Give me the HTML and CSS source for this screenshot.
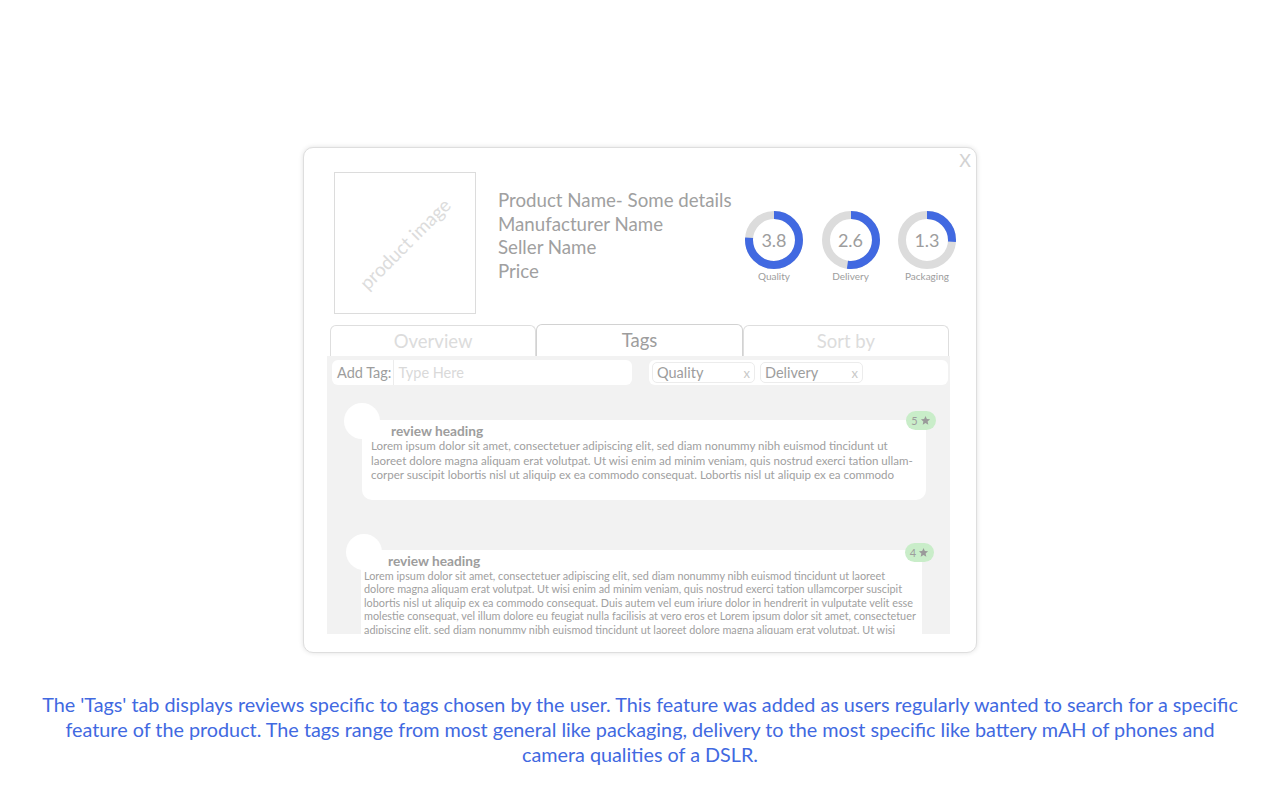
FILE: index.html
```html
<!DOCTYPE html>
<html>
<head>
<meta charset="utf-8">
<link rel="stylesheet" href="styles.css">
</head>
<body>
<div class="page">
  <div class="modal">
    <div class="close">X</div>
    <div class="header">
      <div class="product-img"><span>product image</span></div>
      <div class="product-info">
        <div>Product Name- Some details</div>
        <div>Manufacturer Name</div>
        <div>Seller Name</div>
        <div>Price</div>
      </div>
      <div class="ratings">
        <div class="rating">
          <div class="donut">
            <svg viewBox="0 0 58 58" width="58" height="58"><circle cx="29" cy="29" r="25" class="track"/><circle cx="29" cy="29" r="25" class="arc" stroke-dasharray="119.4 200" transform="rotate(-90 29 29)"/></svg>
            <span class="num">3.8</span>
          </div>
          <div class="rlabel">Quality</div>
        </div>
        <div class="rating">
          <div class="donut">
            <svg viewBox="0 0 58 58" width="58" height="58"><circle cx="29" cy="29" r="25" class="track"/><circle cx="29" cy="29" r="25" class="arc" stroke-dasharray="81.7 200" transform="rotate(-90 29 29)"/></svg>
            <span class="num">2.6</span>
          </div>
          <div class="rlabel">Delivery</div>
        </div>
        <div class="rating">
          <div class="donut">
            <svg viewBox="0 0 58 58" width="58" height="58"><circle cx="29" cy="29" r="25" class="track"/><circle cx="29" cy="29" r="25" class="arc" stroke-dasharray="40.8 200" transform="rotate(-90 29 29)"/></svg>
            <span class="num">1.3</span>
          </div>
          <div class="rlabel">Packaging</div>
        </div>
      </div>
    </div>
    <div class="tabs">
      <div class="tab">Overview</div>
      <div class="tab active">Tags</div>
      <div class="tab">Sort by</div>
    </div>
    <div class="content">
      <div class="filters">
        <div class="addtag"><span class="addlabel">Add Tag:</span><span class="placeholder">Type Here</span></div>
        <div class="chips">
          <div class="chip"><span>Quality</span><span class="cx">x</span></div>
          <div class="chip"><span>Delivery</span><span class="cx">x</span></div>
        </div>
      </div>
      <div class="review r1">
        <div class="avatar"></div>
        <div class="badge">5 <svg viewBox="0 0 24 24" width="11" height="11"><path d="M12 2l2.9 6.9 7.1.6-5.4 4.7 1.6 7-6.2-3.8-6.2 3.8 1.6-7L2 9.5l7.1-.6z"/></svg></div>
        <div class="rhead">review heading</div>
        <div class="rbody">Lorem ipsum dolor sit amet, consectetuer adipiscing elit, sed diam nonummy nibh euismod tincidunt ut<br>laoreet dolore magna aliquam erat volutpat. Ut wisi enim ad minim veniam, quis nostrud exerci tation ullam-<br>corper suscipit lobortis nisl ut aliquip ex ea commodo consequat. Lobortis nisl ut aliquip ex ea commodo</div>
      </div>
      <div class="review r2">
        <div class="avatar"></div>
        <div class="badge">4 <svg viewBox="0 0 24 24" width="11" height="11"><path d="M12 2l2.9 6.9 7.1.6-5.4 4.7 1.6 7-6.2-3.8-6.2 3.8 1.6-7L2 9.5l7.1-.6z"/></svg></div>
        <div class="rhead">review heading</div>
        <div class="rbody">Lorem ipsum dolor sit amet, consectetuer adipiscing elit, sed diam nonummy nibh euismod tincidunt ut laoreet<br>dolore magna aliquam erat volutpat. Ut wisi enim ad minim veniam, quis nostrud exerci tation ullamcorper suscipit<br>lobortis nisl ut aliquip ex ea commodo consequat. Duis autem vel eum iriure dolor in hendrerit in vulputate velit esse<br>molestie consequat, vel illum dolore eu feugiat nulla facilisis at vero eros et Lorem ipsum dolor sit amet, consectetuer<br>adipiscing elit, sed diam nonummy nibh euismod tincidunt ut laoreet dolore magna aliquam erat volutpat. Ut wisi</div>
      </div>
    </div>
  </div>
  <p class="caption">The 'Tags' tab displays reviews specific to tags chosen by the user. This feature was added as users regularly wanted to search for a specific<br>feature of the product. The tags range from most general like packaging, delivery to the most specific like battery mAH of phones and<br>camera qualities of a DSLR.</p>
</div>
</body>
</html>
```
FILE: styles.css
```css
* { box-sizing: border-box; }
html, body { margin: 0; padding: 0; background: #fff; }
body { font-family: "Lato", "Open Sans", sans-serif; color: #9d9d9d; }
.page { width: 1280px; height: 800px; padding-top: 147px; display: flex; flex-direction: column; align-items: center; }
.modal {
  position: relative;
  width: 674px; height: 506px;
  border: 1px solid #dedede;
  border-radius: 10px;
  box-shadow: 0 0 5px rgba(0,0,0,0.12);
  padding: 24px 27px 0 23px;
  background: #fff;
}
.close { position: absolute; right: 5px; top: 2px; font-size: 18px; font-weight: 400; color: #d2d2d2; line-height: 20px; }
.header { display: flex; align-items: flex-start; height: 152px; }
.header > * { flex-shrink: 0; }
.product-img {
  width: 142px; height: 142px; margin-left: 7px;
  border: 1.5px solid #dcdcdc;
  display: flex; align-items: center; justify-content: center;
  overflow: hidden;
}
.product-img span { transform: rotate(-45deg); font-size: 19px; color: #dcdcdc; white-space: nowrap; }
.product-info { width: 247px; margin-left: 22px; margin-top: 17px; font-size: 18.7px; line-height: 23.7px; color: #a0a0a0; white-space: nowrap; }
.ratings { display: flex; gap: 18.5px; margin-top: 39px; }
.rating { width: 58px; display: flex; flex-direction: column; align-items: center; }
.donut { position: relative; width: 58px; height: 58px; }
.donut svg { display: block; }
.track { fill: none; stroke: #dcdcdc; stroke-width: 8; }
.arc { fill: none; stroke: #4169e1; stroke-width: 8; }
.num { position: absolute; inset: 0; display: flex; align-items: center; justify-content: center; font-size: 18px; color: #9d9d9d; }
.rlabel { font-size: 10px; margin-top: 1px; white-space: nowrap; color: #9d9d9d; }
.tabs { display: flex; align-items: flex-end; height: 32px; padding-left: 3px; }
.tab {
  width: 207px; height: 31px;
  border: 1.5px solid #dedede; border-bottom: none;
  border-radius: 6px 6px 0 0;
  background: #fff;
  text-align: center; font-size: 18.5px; line-height: 30px; color: #dcdcdc;
}
.tab.active { height: 32px; color: #9d9d9d; border-color: #d2d2d2; }
.content {
  width: 623px; height: 278px;
  background: #f2f2f2;
  overflow: hidden;
  padding: 4px 2px 0 5px;
}
.filters { display: flex; justify-content: space-between; height: 25px; }
.addtag { width: 300px; height: 25px; background: #fff; border-radius: 6px; display: flex; align-items: center; font-size: 14.5px; }
.addlabel { padding: 0 2px 0 5px; color: #9d9d9d; border-right: 1.5px solid #ececec; line-height: 25px; }
.placeholder { padding-left: 4px; color: #d9d9d9; }
.chips { width: 299px; height: 25px; background: #fff; border-radius: 6px; display: flex; align-items: center; gap: 5px; padding-left: 3px; }
.chip { width: 103px; height: 21px; border: 1px solid #ececec; border-radius: 5px; display: flex; justify-content: space-between; align-items: center; padding: 0 4px; font-size: 14.5px; }
.chip .cx { color: #c8c8c8; font-size: 13px; }
.review { position: relative; background: #fff; }
.r1 { margin: 35px 0 0 30px; width: 564px; height: 80px; border-radius: 10px; padding: 3px 0 0 9px; }
.r2 { margin: 50px 0 0 29px; width: 561px; height: 120px; border-radius: 0 0 10px 10px; padding: 3px 0 0 3px; }
.avatar { position: absolute; width: 36px; height: 36px; border-radius: 50%; background: #fff; left: -18px; top: -17px; }
.r2 .avatar { left: -15px; top: -16px; }
.badge {
  position: absolute; right: -10px; top: -9px;
  height: 19px; width: 30px; border-radius: 10px; background: #c9edc9;
  display: flex; align-items: center; justify-content: center; gap: 2px;
  font-size: 11px; color: #9d9d9d;
}
.r2 .badge { right: -12px; top: -7px; width: 29px; }
.badge svg path { fill: #9a9a9a; }
.rhead { position: relative; font-weight: bold; font-size: 13.7px; line-height: 16px; padding-left: 20px; color: #9d9d9d; }
.r2 .rhead { padding-left: 24px; }
.rbody { font-size: 11.55px; line-height: 14.5px; white-space: nowrap; color: #a0a0a0; }
.r2 .rbody { font-size: 10.85px; line-height: 13.4px; }
.caption { margin: 39px 0 0; text-align: center; color: #4169e1; font-size: 19.8px; line-height: 25px; white-space: nowrap; }
```
